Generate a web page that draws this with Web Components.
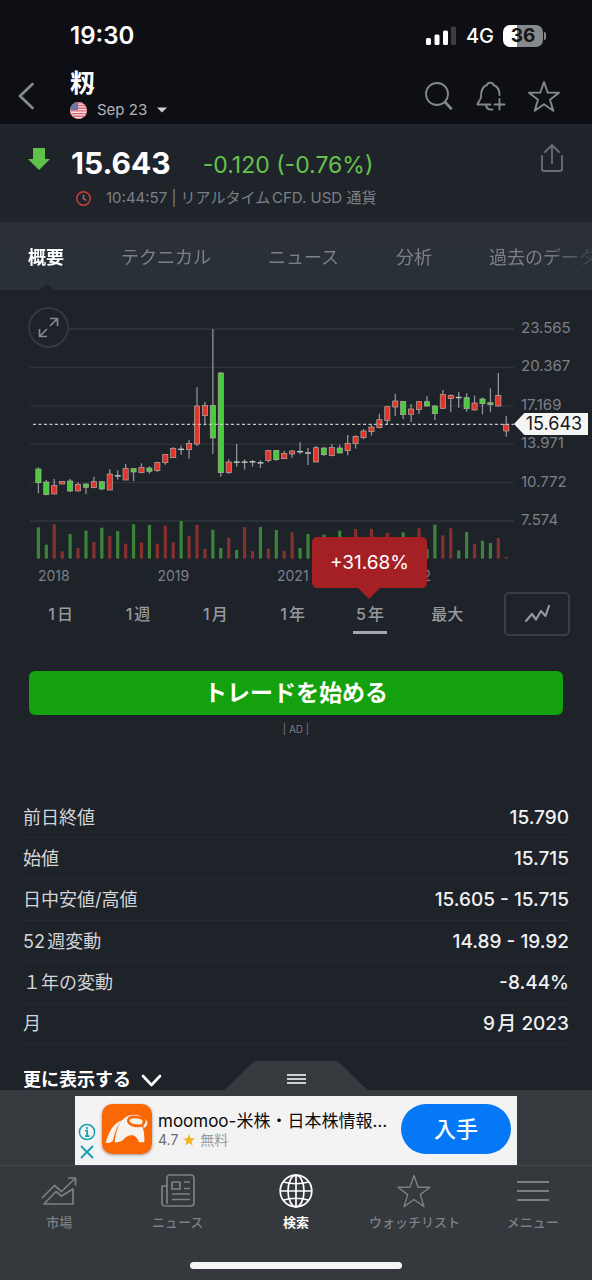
<!DOCTYPE html>
<html lang="ja">
<head>
<meta charset="utf-8">
<meta name="viewport" content="width=device-width, initial-scale=1">
<title>籾 15.643</title>
<style>
  :root {
    --bg: #1e2229;
    --head: #0d0f14;
    --tabs: #2b3038;
    --dock: #35383d;
    --muted: #7d8087;
    --soft: #a0a3a8;
    --line: #33373e;
    --green: #66c24c;
  }
  body {
    margin: 0;
    background: var(--dock);
    color: #fff;
    font-family: Inter, "Noto Sans CJK JP", sans-serif;
    font-size: 18px;
    line-height: 24px;
    text-autospace: normal;
  }
</style>
</head>
<body>
<quote-app></quote-app>
<script>
const base = `<style>
  *, *::before { box-sizing: border-box; }
  button, select { font: inherit; color: inherit; background: none; border: 0; padding: 0; margin: 0; }
  a { color: inherit; text-decoration: none; }
  svg { display: block; flex: none; }
  :host { display: block; }
</style>`;

function define(name, html, setup) {
  const template = document.createElement('template');
  template.innerHTML = base + html;
  customElements.define(name, class extends HTMLElement {
    constructor() {
      super();
      this.attachShadow({ mode: 'open' }).append(template.content.cloneNode(true));
      if (setup) setup(this.shadowRoot);
    }
  });
}

define('status-bar', `<style>
  :host { display: flex; align-items: center; box-sizing: border-box; height: 70px; padding: 2px 46px 0 70px; background: var(--head); }
  time { flex: 1; font-size: 24px; font-weight: 600; }
  .net { font-size: 20px; font-weight: 500; margin: 0 9px 0 10px; }
  .battery { width: 40px; height: 22px; border-radius: 7px; line-height: 22px; text-align: center; font-size: 19px; font-weight: 700; color: #14161a;
    background: linear-gradient(90deg, #fff 36%, #87888b 36%); }
  .cap { width: 2px; height: 8px; margin-left: 1px; border-radius: 0 2px 2px 0; background: #87888b; }
</style>
<time>19:30</time>
<svg width="30" height="20" viewBox="0 0 30 20" fill="#fff"><rect y="12" width="5" height="7" rx="1.5"/><rect x="8.500" y="8.500" width="5" height="10.500" rx="1.500"/><rect x="17" y="4.500" width="5" height="14.500" rx="1.500"/><rect x="25" y=".5" width="5" height="18.500" rx="1.500" fill="#3c3d42"/></svg>
<span class="net">4G</span><span class="battery">36</span><span class="cap"></span>`);

define('title-bar', `<style>
  :host { display: flex; align-items: center; box-sizing: border-box; height: 56px; padding: 0 32px 2px 18px; background: var(--head); border-bottom: 2px solid #24272d; color: #85888d; }
  .names { flex: 1; margin-left: 35px; }
  h1 { margin: 0; font-size: 25px; line-height: 28px; font-weight: 700; color: #fff; }
  label { display: flex; align-items: center; height: 26px; font-size: 15px; color: #b2b4b8; }
  select { appearance: none; margin: 0 9px 0 10px; line-height: 20px; }
  .tools { display: flex; gap: 22px; align-items: center; }
  button { display: block; }
</style>
<button aria-label="戻る"><svg width="17" height="28" viewBox="0 0 17 28" fill="none" stroke="currentColor" stroke-width="2.800" stroke-linecap="round" stroke-linejoin="round"><path d="M14.500 2 2 14l12.500 12"/></svg></button>
<div class="names"><h1>籾</h1>
<label aria-label="限月"><svg width="17" height="17" viewBox="0 0 17 17"><defs><clipPath id="r"><circle cx="8.500" cy="8.500" r="8.500"/></clipPath></defs><g clip-path="url(#r)"><path fill="#f3dfe2" d="M0 0h17v17H0z"/><path stroke="#de6672" stroke-width="1.400" d="M0 .8h17M0 3.500h17M0 6.200h17M0 8.900h17M0 11.600h17M0 14.300h17M0 16.900h17"/><path fill="#6878a4" d="M0 0h8v8H0z"/></g></svg>
<select><option>Sep 23</option></select>
<svg width="10" height="6" viewBox="0 0 10 6"><path d="M0 .5h10L5 5.500z" fill="#d0d1d4"/></svg></label></div>
<div class="tools">
<button aria-label="検索"><svg width="30" height="30" viewBox="0 0 30 30" fill="none" stroke="currentColor" stroke-width="1.800" stroke-linecap="round"><circle cx="13" cy="13" r="11"/><path d="m21 21 6 6.500" stroke-width="2.600"/></svg></button>
<button aria-label="アラート"><svg width="30" height="30" viewBox="0 0 30 30" fill="none" stroke="currentColor" stroke-width="1.900" stroke-linecap="round" stroke-linejoin="round"><path d="M14.500 23.500H1.500c-.5-2 3.500-3.500 3.500-8 0-6 1-10 6-11.500.5-3 6-3 6.500 0 4.500 1.500 6 5.500 6 10M10 24c.5 3.500 3 5 6.500 4.500M23.500 18v10.500M18.500 23.500h10"/></svg></button>
<button aria-label="ウォッチリストに追加"><svg width="32" height="32" viewBox="0 0 32 32" fill="none" stroke="currentColor" stroke-width="1.900" stroke-linejoin="round"><path d="m16 2 3.700 10.500L31 12.800l-9 7 3.300 11L16 24.300l-9.300 6.500 3.300-11-9-7 11.300-.3z"/></svg></button>
</div>`);

define('quote-summary', `<style>
  :host { display: flex; align-items: flex-start; box-sizing: border-box; height: 97px; padding: 17px 28px 0 28px; background: #1f242b; border-bottom: 1px solid #282c33; }
  .arrow { margin: 5px 21px 0 0; }
  .body { flex: 1; }
  .row { display: flex; align-items: center; height: 40px; }
  .price { font-size: 30px; line-height: 40px; font-weight: 700; margin-right: 32px; }
  .change { font-size: 23px; line-height: 28px; color: var(--green); padding-top: 4px; }
  .info { display: flex; align-items: center; height: 30px; margin-left: 5px; font-size: 15px; line-height: 20px; color: var(--muted); }
  .info svg { margin-right: 15px; }
</style>
<svg class="arrow" width="22" height="22" viewBox="0 0 22 22"><path fill="#5fc04a" d="M5 0h12v11h5L11 22 0 11h5z"/></svg>
<div class="body">
 <div class="row"><span class="price">15.643</span><span class="change">-0.120 (-0.76%)</span></div>
 <div class="info"><svg width="15" height="15" viewBox="0 0 15 15" fill="none" stroke="#c9403a" stroke-width="1.500"><circle cx="7.500" cy="7.500" r="6.700"/><path d="M7.500 3.500v4l3 2" stroke="#9a6a6a"/></svg><span>10:44:57 | リアルタイムCFD. USD 通貨</span></div>
</div>
<button aria-label="共有"><svg width="24" height="30" viewBox="0 0 24 30" fill="none" stroke="#696c73" stroke-width="1.900" stroke-linecap="round" stroke-linejoin="round"><path d="M2 13v13q0 2 2 2h16q2 0 2-2V13M12 20V2M5 9l7-7 7 7"/></svg></button>`);

define('section-tabs', `<style>
  :host { position: relative; background: linear-gradient(#2c3037, #293038); }
  nav { display: flex; gap: 57px; height: 67px; align-items: center; padding: 2px 0 0 28px; overflow: hidden; white-space: nowrap; color: var(--muted);
    mask-image: linear-gradient(90deg, #000 92%, transparent 102%); }
  a { flex: none; }
  a[aria-current] { color: #fff; font-weight: 700; }
  .notch { position: absolute; left: 40px; bottom: 0; }
</style>
<nav><a href="#overview" aria-current="page">概要</a><a href="#technical">テクニカル</a><a href="#news">ニュース</a><a href="#analysis">分析</a><a href="#history">過去のデータ</a></nav>
<svg class="notch" width="14" height="6" viewBox="0 0 14 6"><path d="M0 6 7 0l7 6z" fill="#1e2229"/></svg>`);

// Each row: body colour, high, body top, body bottom, low, volume colour, volume top (in thirds of a pixel).
const candles = `G502,507,548,580G682 G540,546,584,586G734 R537,556,582,583R673 R543,544,552,552R754 G537,543,573,576G702
R547,553,573,574R744 G550,552,562,582G692 R530,545,563,565R726 G543,545,567,571G683 R508,522,570,571R708 G511,525,530,539G693
R492,505,540,540R731 G506,506,516,544G673 R490,502,518,520R728 G499,504,514,521G675 R485,487,512,515R731 R462,463,488,494R677
R441,445,473,474R727 G437,447,449,464G663 R420,430,449,476R708 R262,318,432,438R674 R306,316,347,376R747 G87,316,414,462G689
G216,219,518,530G744 R478,486,518,522R713 G432,485,488,500G750 R478,485,488,509R681 R480,484,487,500R753 G481,487,490,504G681
R450,451,482,487R746 G450,451,479,482G690 R452,460,476,477R753 R450,453,462,473R697 G427,453,457,463G744 G444,457,461,495G702
R438,443,486,487R720 G442,444,464,468G704 R432,442,467,469R720 G434,444,459,460G692 R405,430,452,466R740 R406,409,431,446R687
R387,393,413,418R730 R373,381,395,407R687 R341,359,383,385R740 R318,320,361,372R699 R281,303,321,347R730 G304,304,344,358G697
R312,327,343,366R730 R303,305,329,342R685 G289,305,318,320G747 G315,318,341,360G674 R270,283,325,327R706 R283,286,296,337R685
G275,291,294,323G751 G280,293,326,335G696 R287,309,330,331R732 G292,297,311,343G722 G265,308,314,337G729 R219,286,318,320R714
R348,373,393,410R771`.split(/\s+/);

define('price-chart', `<style>
  :host { position: relative; padding: 28px 0 6px 28px; }
  .frame { display: grid; grid-template-columns: 1fr 78px; align-items: start; }
  .plot { width: 100%; }
  .axis { display: flex; flex-direction: column; justify-content: space-between; height: 212px; padding-left: 7px; font-size: 15px; line-height: 20px; color: var(--muted); }
  .years { display: grid; grid-template-columns: repeat(4, 1fr); margin: 6px 76px 0 10px; font-size: 14px; line-height: 20px; color: var(--muted); }
  .expand { position: absolute; left: 28px; top: 17px; width: 41px; height: 41px; border: 2px solid #34383f; border-radius: 50%; background: var(--bg); display: grid; place-items: center; }
  .tag { position: absolute; right: 4px; top: 123px; width: 74px; height: 22px; padding-left: 6px; text-align: center; line-height: 22px; font-size: 18px; color: #15171b; background: #f5f5f5; clip-path: polygon(0 50%, 14% 0, 100% 0, 100% 100%, 14% 100%); }
</style>
<div class="frame">
<svg class="plot" viewBox="28 318 486 242"><g id="g"></g></svg>
<div class="axis"><span>23.565</span><span>20.367</span><span>17.169</span><span>13.971</span><span>10.772</span><span>7.574</span></div>
</div>
<div class="years"><span>2018</span><span>2019</span><span>2021</span><span>2022</span></div>
<button class="expand" aria-label="拡大"><svg width="21" height="21" viewBox="0 0 21 21" fill="none" stroke="#85888d" stroke-width="1.700"><path d="M12 9l7.500-7.500M12 1.500h7.500V9M9 12l-7.500 7.500M1.500 12v7.500H9"/></svg></button>
<span class="tag">15.643</span>`, root => {
  let out = '';
  for (let i = 0; i < 6; i++) out += `<path d="M30 ${329 + i * 38.4}H514" stroke="#30343b" stroke-width="1.300"/>`;
  candles.forEach((row, i) => {
    const m = row.match(/^(.)(\d+),(\d+),(\d+),(\d+)(.)(\d+)$/);
    const [hi, top, bot, lo, vol] = [m[2], m[3], m[4], m[5], m[7]].map(v => v / 3 + 300);
    const x = 38.4 + i * 7.93;
    out += `<rect x="${x - 1.6}" y="${vol}" width="3.200" height="${558.6 - vol}" fill="${m[6] === 'G' ? '#3c843a' : '#86302f'}"/>`;
    out += `<path d="M${x} ${hi}V${lo}" stroke="#8f9298" stroke-width="1.300"/>`;
    out += bot - top < 1.8
      ? `<path d="M${x - 3} ${(top + bot) / 2}h6" stroke="#b9c4b9" stroke-width="1.500"/>`
      : `<rect x="${x - 2.6}" y="${top}" width="5.200" height="${bot - top}" fill="${m[1] === 'G' ? '#47cc3c' : '#e2352c'}" stroke="#b3a9a3" stroke-width=".7"/>`;
  });
  out += '<path d="M33 424.300H514" stroke="#c5c7c9" stroke-width="1.200" stroke-dasharray="3 2.500"/>';
  root.getElementById('g').innerHTML = out;
});

define('range-picker', `<style>
  :host { position: relative; display: flex; gap: 18px; align-items: center; box-sizing: border-box; height: 44px; padding: 0 22px; }
  .ranges { flex: 1; display: grid; grid-template-columns: repeat(6, 1fr); justify-items: center; font-size: 16px; font-weight: 500; line-height: 22px; color: #96999e; }
  .ranges button { position: relative; padding: 6px 3px; border-bottom: 3px solid transparent; border-top: 3px solid transparent; }
  .ranges [aria-pressed=true] { border-bottom-color: #a5a5af; }
  .type { width: 66px; height: 44px; border: 2px solid #393d45; border-radius: 5px; display: grid; place-items: center; }
  .bubble { position: absolute; right: -40px; bottom: 43px; height: 51px; padding: 0 18px; border-radius: 5px; background: #a52025; color: #fff; font-size: 19px; font-weight: 400; line-height: 51px; }
  .bubble::before { content: ""; position: absolute; left: calc(50% - 12px); top: 50px; border: 12px solid transparent; border-top-color: #a52025; border-bottom: 0; }
</style>
<div class="ranges"><button>1日</button><button>1週</button><button>1月</button><button>1年</button><button aria-pressed="true">5年<span class="bubble">+31.68%</span></button><button>最大</button></div>
<button class="type" aria-label="チャートの種類"><svg width="27" height="20" viewBox="0 0 27 20" fill="none" stroke="#94979b" stroke-width="2.200" stroke-linejoin="round" stroke-linecap="round"><path d="m2 17 6-7 4 5.500L17 7l4.500 5L25 2"/></svg></button>`);

define('trade-cta', `<style>
  :host { padding: 35px 29px 0; text-align: center; }
  button { display: block; width: 100%; height: 44px; border-radius: 6px; background: #13a10d; color: #fff; font-size: 23px; font-weight: 700; }
  small { display: block; margin-top: 4px; font-size: 10px; line-height: 20px; color: var(--muted); }
</style>
<button>トレードを始める</button><small>| AD |</small>`);

define('quote-stats', `<style>
  :host { padding: 58px 23px 0; }
  table { width: 100%; height: 248px; border-collapse: collapse; }
  th, td { padding: 1px 0 0; border-bottom: 1px solid #262a31; line-height: 24px; }
  th { text-align: left; font-weight: 400; color: #d4d5d8; }
  td { text-align: right; font-size: 19px; font-weight: 500; color: #f1f1f3; }
  .more { display: flex; align-items: center; gap: 10px; height: 45px; padding-top: 25px; line-height: 20px; font-weight: 700; }
</style>
<table>
<tr><th scope="row">前日終値</th><td>15.790</td></tr>
<tr><th scope="row">始値</th><td>15.715</td></tr>
<tr><th scope="row">日中安値/高値</th><td>15.605 - 15.715</td></tr>
<tr><th scope="row">52週変動</th><td>14.89 - 19.92</td></tr>
<tr><th scope="row">１年の変動</th><td>-8.44%</td></tr>
<tr><th scope="row">月</th><td>9月 2023</td></tr>
</table>
<button class="more">更に表示する<svg width="21" height="13" viewBox="0 0 21 13" fill="none" stroke="#fff" stroke-width="2.600" stroke-linecap="round" stroke-linejoin="round"><path d="m2 2 8.500 9L19 2"/></svg></button>`);

define('ad-banner', `<style>
  :host { position: relative; box-sizing: border-box; padding: 6px 75px 0; height: 75px; background: #363a3e; }
  .handle { position: absolute; left: 50%; top: -29px; width: 144px; height: 30px; margin-left: -72px; display: grid; place-items: center; padding-top: 6px;
    background: #363a3e; clip-path: polygon(0 100%, 21% 0, 79% 0, 100% 100%); }
  article { display: flex; align-items: center; height: 69px; padding: 0 6px 3px 3px; background: #f3f3f4; color: #0b0b0c; }
  .marks { display: grid; gap: 4px; justify-items: center; margin: 24px 6px 0 0; width: 18px; }
  .logo { border-radius: 10px; box-shadow: 0 1px 3px #0006; }
  .copy { flex: 1; min-width: 0; margin: 0 8px 0 6px; }
  h2 { margin: 0; font-size: 17px; line-height: 22px; font-weight: 400; white-space: nowrap; text-autospace: no-autospace; }
  p { display: flex; align-items: center; gap: 5px; margin: 0; font-size: 14px; line-height: 16px; color: #9a9b9e; }
  .score { color: #6c6d70; }
  .get { width: 110px; height: 50px; border-radius: 25px; background: #0578f7; color: #fff; font-size: 22px; font-weight: 500; }
</style>
<button class="handle" aria-label="広告を閉じる"><svg width="19" height="10" viewBox="0 0 19 10" stroke="#fff" stroke-width="1.500"><path d="M0 1h19M0 5h19M0 9h19"/></svg></button>
<article>
<div class="marks"><svg width="18" height="18" viewBox="0 0 18 18" fill="none" stroke="#16a0b4"><circle cx="9" cy="9" r="7.600" stroke-width="1.500"/><path d="M7 7.500h2.200v5.500M7 13.200h4.500M9 4v2" stroke-width="1.700"/></svg>
<svg width="14" height="14" viewBox="0 0 14 14" stroke="#16a0b4" stroke-width="1.900"><path d="m1 1 12 12M13 1 1 13"/></svg></div>
<svg class="logo" width="50" height="50" viewBox="0 0 150 150"><path fill="#fa6806" d="M0 0h150v150H0z"/><g fill="#f8f2ee"><path d="M11 117C20 84 36 54 62 49 46 62 38 88 34 106q-2 9-12 10z"/><path d="M38 115c3-26 10-62 34-76 14-9 38-9 50 3l-2 24c6 12 8 32 7 49h-16c-4-13-12-21-22-21-13 0-20 8-25 13-8 7-14 7-26 8z"/></g><path d="M126 46C108 36 82 36 79 48c-2 14 24 22 45 15" fill="none" stroke="#fa6806" stroke-width="8"/><path d="M130 46c9 6 9 20-4 26-2-4-2-6-1-9 6-4 7-9 5-17z" fill="#f8f2ee"/></svg>
<div class="copy"><h2>moomoo-米株・日本株情報…</h2><p><span class="score">4.7</span><svg width="12" height="12" viewBox="0 0 12 12"><path fill="#f0b41c" d="m6 0 1.600 4.200 4.400.2-3.500 2.800 1.200 4.300L6 9.100l-3.700 2.400 1.200-4.300L0 4.400l4.400-.2z"/></svg><span>無料</span></p></div>
<button class="get">入手</button>
</article>`);

define('nav-item', `<style>
  :host { flex: 1; display: block; font-weight: 500; color: #7c7f84; }
  :host([active]) { color: #fff; font-weight: 700; }
  a { display: flex; flex-direction: column; align-items: center; gap: 4px; font-size: 13px; line-height: 20px; }
</style><a href="#"><slot name="icon"></slot><slot></slot></a>`);

define('bottom-nav', `<style>
  :host { flex: 1; background: var(--dock); border-top: 1px solid #42464a; }
  nav { display: flex; padding-top: 8px; height: 96px; }
  svg { fill: none; stroke: currentColor; stroke-width: 1.700; stroke-linejoin: round; }
  .home { width: 212px; height: 7px; margin: 0 auto; border-radius: 4px; background: #f5f5f5; }
</style>
<nav>
<nav-item><svg slot="icon" width="36" height="34" viewBox="0 0 36 34"><path d="M1 24 13.500 11.500l7 6L34.500 4M27 4h7.500v7.500M3 30l12-12.500 5.500 4.500L32 15v15z"/></svg>市場</nav-item>
<nav-item><svg slot="icon" width="34" height="34" viewBox="0 0 34 34"><path d="M6 30V4q0-3 3-3h21q3 0 3 3v25q0 3-3 3H4q-3 0-3-3V12h5M11 8h8v7h-8zM23 8h6M23 14.500h6M11 20h18M11 25.500h18"/></svg>ニュース</nav-item>
<nav-item active><svg slot="icon" width="34" height="34" viewBox="0 0 34 34"><circle cx="17" cy="17" r="15.800"/><ellipse cx="17" cy="17" rx="8" ry="15.800"/><path d="M17 1v32M1 17h32M4.500 8q12.500 3.500 25 0M4.500 26q12.500-3.500 25 0"/></svg>検索</nav-item>
<nav-item><svg slot="icon" width="34" height="34" viewBox="0 0 34 34" style="stroke-width:1.400"><path d="m17 1.500 4 11.700 12 .1-9.700 7.300 3.700 12L17 25.500l-10 7.100 3.700-12L1 13.300l12-.1z"/></svg>ウォッチリスト</nav-item>
<nav-item><svg slot="icon" width="34" height="34" viewBox="0 0 34 34" style="stroke-width:2.200"><path d="M1 8h32M1 17h32M1 26h32"/></svg>メニュー</nav-item>
</nav>
<div class="home"></div>`);

define('quote-app', `<style>
  :host { display: flex; flex-direction: column; min-height: 100vh; background: var(--bg); }
</style>
<status-bar></status-bar><title-bar></title-bar>
<quote-summary></quote-summary><section-tabs></section-tabs>
<price-chart></price-chart><range-picker></range-picker>
<trade-cta></trade-cta><quote-stats></quote-stats>
<ad-banner></ad-banner><bottom-nav></bottom-nav>`);
</script>
</body>
</html>
